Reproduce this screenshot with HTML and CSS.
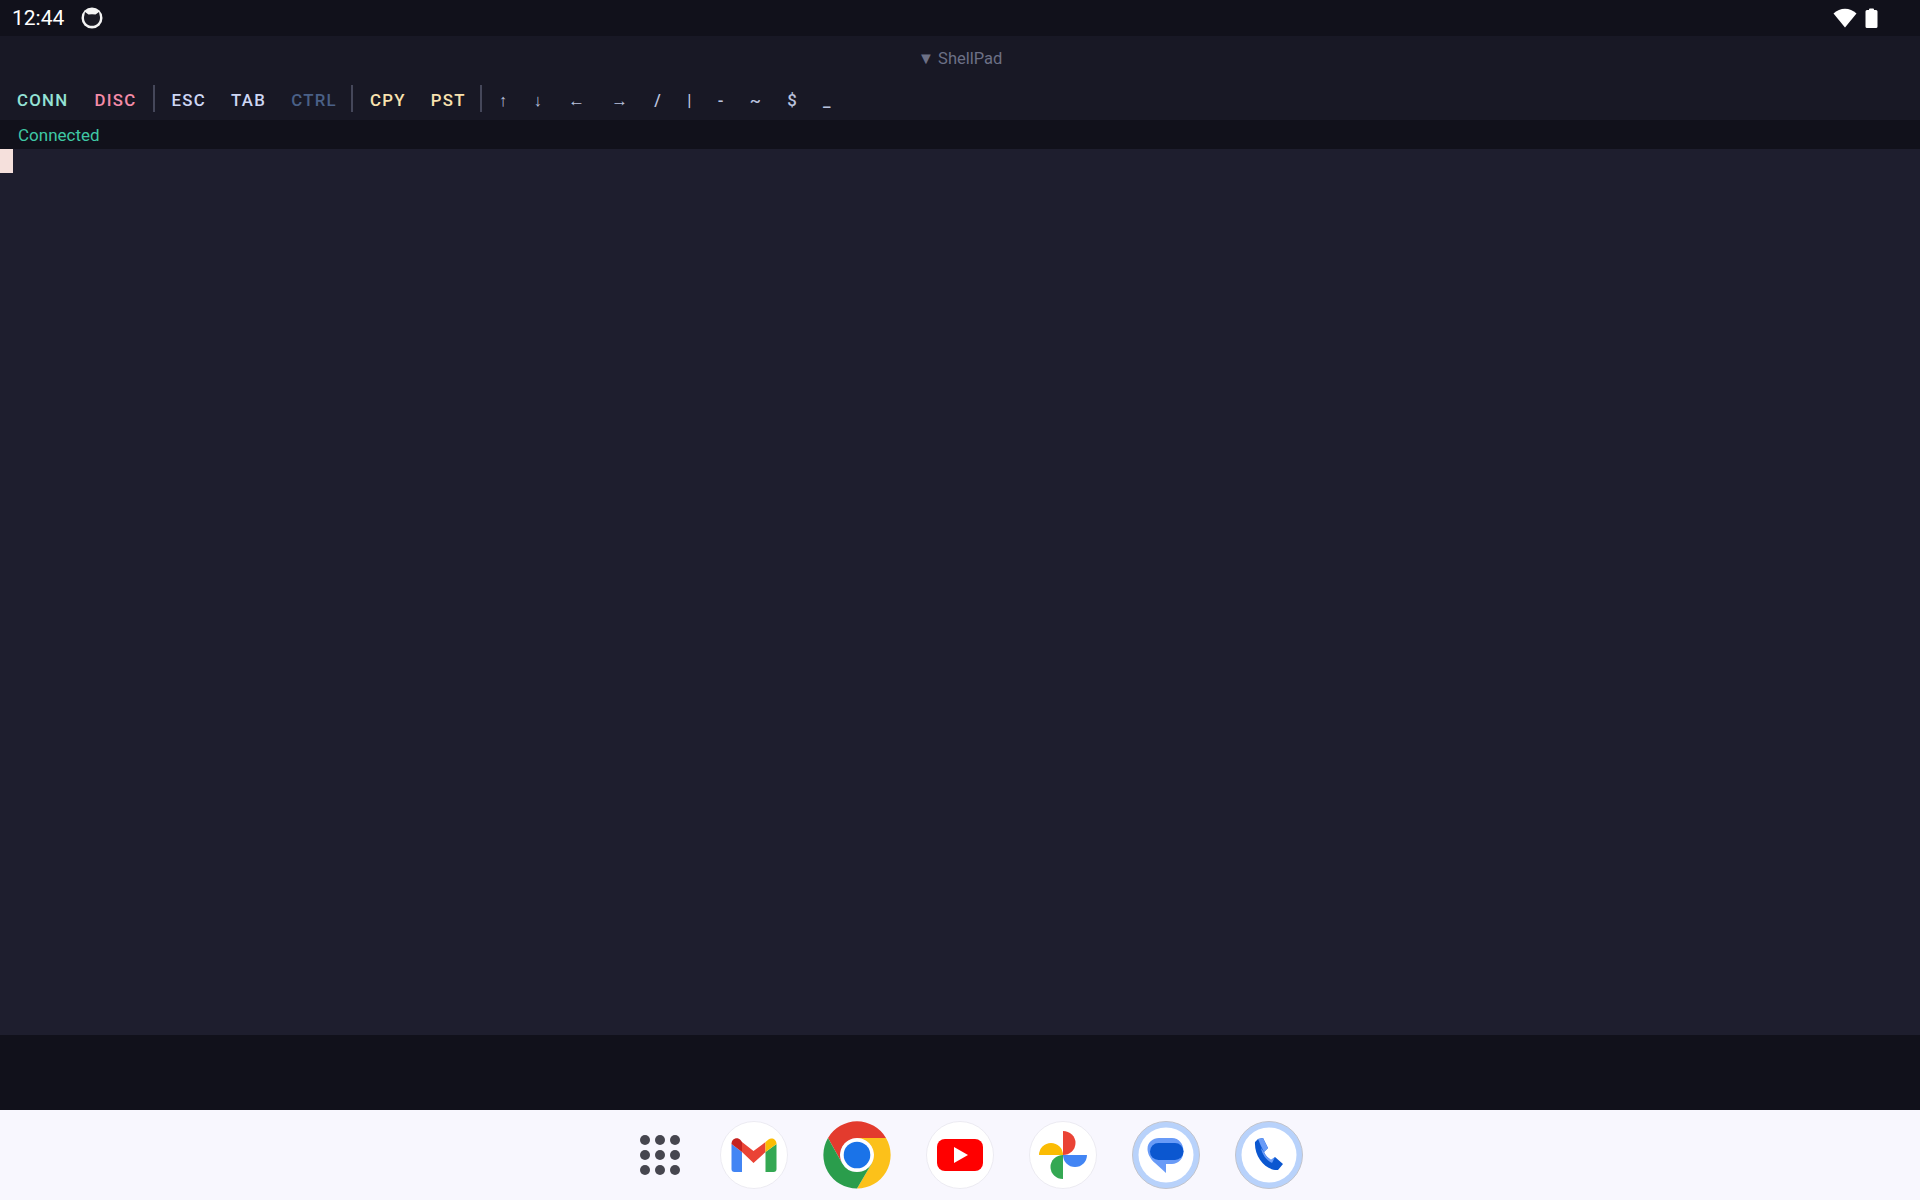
FILE: index.html
```html
<!DOCTYPE html>
<html lang="en">
<head>
    <meta charset="UTF-8">
    <meta name="viewport" content="width=device-width, initial-scale=1.0">
    <title>ShellPad</title>
    <link rel="stylesheet" href="styles.css">
</head>
<body>
    <div class="status-bar">
        <div class="status-left">
            <span class="clock">12:44</span>
            <svg class="notif-icon" width="22" height="22" viewBox="0 0 22 22">
                <circle cx="11" cy="11" r="10.5" fill="#f4f4f4"/>
                <path d="M3 10 L4 5 L7.5 7.5 Q11 6.8 14.5 7.5 L18 5 L19 10 C19.3 15.5 15.5 18.8 11 18.8 C6.5 18.8 2.7 15.5 3 10Z" fill="#1a1a24"/>
            </svg>
        </div>
        <div class="status-right">
            <svg width="24" height="20" viewBox="0 0 24 20">
                <path d="M0.5 5.5 C7 -0.8 17 -0.8 23.5 5.5 L12 19.5Z" fill="#fff"/>
            </svg>
            <svg width="13" height="20" viewBox="0 0 13 20">
                <path d="M4 1.5 Q4 0.5 5 0.5 H8 Q9 0.5 9 1.5 V2 H11 Q12.5 2 12.5 3.5 V18.5 Q12.5 20 11 20 H2 Q0.5 20 0.5 18.5 V3.5 Q0.5 2 2 2 H4Z" fill="#fff"/>
            </svg>
        </div>
    </div>

    <div class="app-title">▼ ShellPad</div>

    <div class="toolbar">
        <button class="key conn">CONN</button>
        <button class="key disc">DISC</button>
        <span class="sep"></span>
        <button class="key">ESC</button>
        <button class="key">TAB</button>
        <button class="key ctrl">CTRL</button>
        <span class="sep"></span>
        <button class="key clip">CPY</button>
        <button class="key clip">PST</button>
        <span class="sep"></span>
        <button class="key sym">↑</button>
        <button class="key sym">↓</button>
        <button class="key sym">←</button>
        <button class="key sym">→</button>
        <button class="key sym">/</button>
        <button class="key sym">|</button>
        <button class="key sym">-</button>
        <button class="key sym">~</button>
        <button class="key sym">$</button>
        <button class="key sym">_</button>
    </div>

    <div class="conn-status">Connected</div>

    <div class="terminal">
        <div class="cursor"></div>
    </div>

    <div class="bottom-gap"></div>

    <div class="dock">
        <svg class="dock-icon apps" viewBox="-34 -34 68 68">
            <g fill="#46464f">
                <circle cx="-15" cy="-15" r="5"/><circle cx="0" cy="-15" r="5"/><circle cx="15" cy="-15" r="5"/>
                <circle cx="-15" cy="0" r="5"/><circle cx="0" cy="0" r="5"/><circle cx="15" cy="0" r="5"/>
                <circle cx="-15" cy="15" r="5"/><circle cx="0" cy="15" r="5"/><circle cx="15" cy="15" r="5"/>
            </g>
        </svg>

        <svg class="dock-icon" viewBox="-34 -34 68 68">
            <circle r="33.5" fill="#fff" stroke="#ecebf2"/>
            <path d="M-22.5 -11 L-12 -3 V17 H-19.5 A3 3 0 0 1 -22.5 14Z" fill="#4285f4"/>
            <path d="M11.5 -3 L22.5 -11 V14 A3 3 0 0 1 19.5 17 H11.5Z" fill="#34a853"/>
            <path d="M-12 -13 L-0.5 -4 L11.5 -13 V-3 L-0.5 8 L-12 -3Z" fill="#ea4335"/>
            <path d="M-22.5 -11 C-22.5 -16.5 -16.5 -18.5 -13.5 -15 L-12 -13 V-3Z" fill="#c5221f"/>
            <path d="M11.5 -13 L14.5 -15.5 C17.5 -18 22.5 -16 22.5 -11 L11.5 -3Z" fill="#fbbc04"/>
        </svg>

        <svg class="dock-icon" viewBox="-34 -34 68 68">
            <path d="M-29 -17 A33.5 33.5 0 0 1 29 -17 H0 A17 17 0 0 0 -15 8Z" fill="#e33b2e"/>
            <path d="M29 -17 A33.5 33.5 0 0 1 0 33.5 L15 8 A17 17 0 0 0 0 -17Z" fill="#fcc11a"/>
            <path d="M0 33.5 A33.5 33.5 0 0 1 -29 -17 L-15 8 A17 17 0 0 0 15 8Z" fill="#2a9d4c"/>
            <circle r="16.5" fill="#fff"/>
            <circle r="13.3" fill="#1a73e8"/>
        </svg>

        <svg class="dock-icon" viewBox="-34 -34 68 68">
            <circle r="33.5" fill="#fff" stroke="#ecebf2"/>
            <rect x="-23" y="-16" width="46" height="32" rx="8" fill="#f00"/>
            <path d="M-6 -8 L8 0 L-6 8Z" fill="#fff"/>
        </svg>

        <svg class="dock-icon" viewBox="-34 -34 68 68">
            <circle r="33.5" fill="#fff" stroke="#ecebf2"/>
            <path d="M0 0 V-24 A12.5 12 0 0 1 0 0Z" fill="#ea4335"/>
            <path d="M0 0 H-24 A12 12 0 0 1 0 0Z" fill="#fbbc04"/>
            <path d="M0 0 H24 A12 12 0 0 1 0 0Z" fill="#4285f4"/>
            <path d="M0 0 V24 A12.5 12 0 0 1 0 0Z" fill="#34a853"/>
        </svg>

        <svg class="dock-icon" viewBox="-34 -34 68 68">
            <circle r="33.5" fill="#b8d2fb" stroke="#c2c4cc"/>
            <circle r="27.5" fill="#fff"/>
            <path d="M-7 -17 H6 C13 -17 17.5 -11 17.5 -4 C17.5 4 12 9 6 9 H0 V18 L-11 8 C-16 4 -18.5 -2 -18.5 -6 C-18.5 -13 -13 -17 -7 -17Z" fill="#699bf7"/>
            <rect x="-16" y="-12" width="33.5" height="17" rx="8.5" fill="#0b57d0"/>
        </svg>

        <svg class="dock-icon" viewBox="-34 -34 68 68">
            <circle r="33.5" fill="#b8d2fb" stroke="#c2c4cc"/>
            <circle r="27.5" fill="#fff"/>
            <path d="M-11 -16 L-6 -17 L-1 -7 L-5 -3 C-4 0 -1 3 2 5 L6 2 L14 9 L9 15 C-3 16 -15 2 -14 -13Z" fill="#0b57d0"/>
            <path d="M-11 -16 L-6 -17 L-1 -7 L-5 -3 L-8 -9Z" fill="#699bf7"/>
            <path d="M-8 -7 C-7 -1 -3 5 3 8 L6 2 L2 5 C-1 3 -4 0 -5 -3Z" fill="#699bf7"/>
        </svg>
    </div>
</body>
</html>
```

FILE: styles.css
```css
* {
    margin: 0;
    padding: 0;
    box-sizing: border-box;
}

body {
    font-family: Roboto, "Noto Sans", sans-serif;
    background-color: #1e1e2e;
    height: 1200px;
    display: flex;
    flex-direction: column;
    overflow: hidden;
}

.status-bar {
    height: 36px;
    background-color: #11111b;
    color: #fff;
    display: flex;
    justify-content: space-between;
    align-items: center;
    padding: 0 42px 0 12px;
}

.status-left {
    display: flex;
    align-items: center;
    gap: 17px;
}

.status-right {
    display: flex;
    align-items: center;
    gap: 8px;
}

.clock {
    font-size: 21px;
}

.app-title {
    height: 39px;
    background-color: #181825;
    color: #6c7086;
    font-size: 16.5px;
    text-align: center;
    padding-top: 13px;
}

.toolbar {
    height: 45px;
    background-color: #181825;
    display: flex;
    align-items: center;
    padding: 1px 4px 0 4.5px;
}

.key {
    background: none;
    border: none;
    font-family: inherit;
    font-size: 16.8px;
    font-weight: 500;
    letter-spacing: 1.3px;
    color: #cdd6f4;
    padding: 4px 12.5px 0;
}

.conn { color: #94e2d5; margin-right: 1px; }
.disc { color: #f38ba8; margin-right: 2px; }
.ctrl { color: #4a6087; }
.clip { color: #f9e2af; }

.sym {
    color: #bac2de;
}

.sep {
    width: 2px;
    height: 27px;
    margin: 0 4px 0 2px;
    background-color: #45475a;
}

.conn-status {
    height: 29px;
    background-color: #11111b;
    color: #3fc8a4;
    font-size: 17px;
    line-height: 30px;
    padding-left: 18px;
}

.terminal {
    flex: 1;
    background-color: #1e1e2e;
}

.cursor {
    width: 13px;
    height: 24px;
    background-color: #f5e0dc;
}

.bottom-gap {
    height: 75px;
    background-color: #11111b;
}

.dock {
    height: 90px;
    background-color: #f8f7fe;
    display: flex;
    justify-content: center;
    align-items: center;
    gap: 35px;
}

.dock-icon {
    width: 68px;
    height: 68px;
}

.apps {
    margin-left: 9px;
    margin-right: -9px;
}
```
